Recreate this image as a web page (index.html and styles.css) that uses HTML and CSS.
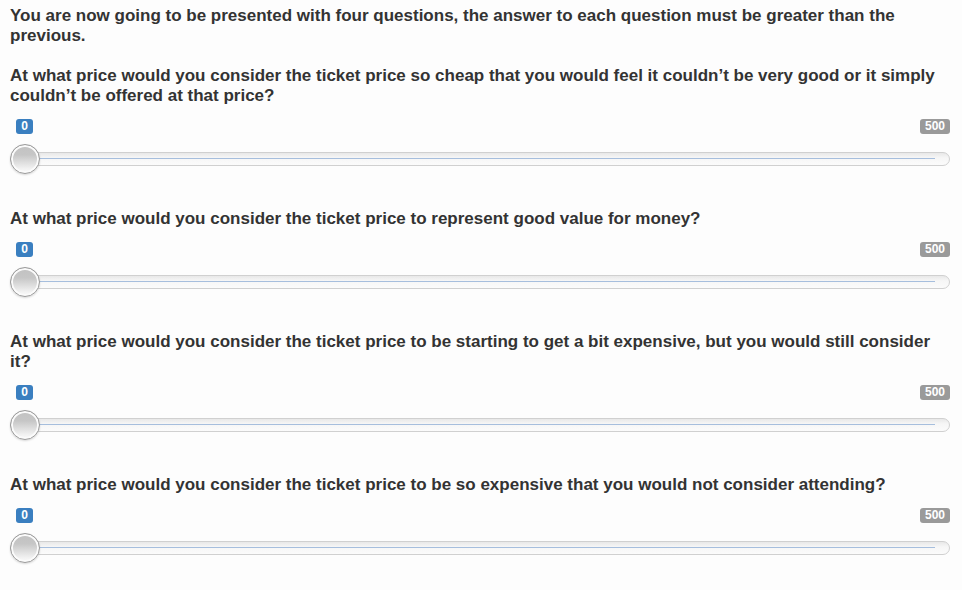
FILE: index.html
```html
<!DOCTYPE html>
<html>
<head>
<meta charset="utf-8">
<link rel="stylesheet" href="styles.css">
</head>
<body>
<div class="page">
  <p class="intro">You are now going to be presented with four questions, the answer to each question must be greater than the previous.</p>

  <div class="question">
    <p class="q-text">At what price would you consider the ticket price so cheap that you would feel it couldn’t be very good or it simply couldn’t be offered at that price?</p>
    <div class="labels"><span class="badge badge-val">0</span><span class="badge badge-max">500</span></div>
    <div class="slider"><div class="track"><div class="line"></div></div><div class="thumb"></div></div>
  </div>

  <div class="question">
    <p class="q-text">At what price would you consider the ticket price to represent good value for money?</p>
    <div class="labels"><span class="badge badge-val">0</span><span class="badge badge-max">500</span></div>
    <div class="slider"><div class="track"><div class="line"></div></div><div class="thumb"></div></div>
  </div>

  <div class="question">
    <p class="q-text">At what price would you consider the ticket price to be starting to get a bit expensive, but you would still consider it?</p>
    <div class="labels"><span class="badge badge-val">0</span><span class="badge badge-max">500</span></div>
    <div class="slider"><div class="track"><div class="line"></div></div><div class="thumb"></div></div>
  </div>

  <div class="question">
    <p class="q-text">At what price would you consider the ticket price to be so expensive that you would not consider attending?</p>
    <div class="labels"><span class="badge badge-val">0</span><span class="badge badge-max">500</span></div>
    <div class="slider"><div class="track"><div class="line"></div></div><div class="thumb"></div></div>
  </div>
</div>
</body>
</html>
```
FILE: styles.css
```css
html, body {
  margin: 0;
  padding: 0;
  background: #fdfdfd;
}
.page {
  padding: 6px 12px 0 10px;
  font-family: "Liberation Sans", Arial, sans-serif;
  font-weight: bold;
  font-size: 17px;
  line-height: 20px;
  color: #333333;
}
p {
  margin: 0;
}
.intro {
  margin-bottom: 20px;
}
.question {
  margin-bottom: 35px;
}
.labels {
  display: flex;
  justify-content: space-between;
  margin-top: 13px;
  padding-left: 6px;
  height: 15px;
}
.badge {
  display: inline-block;
  height: 15px;
  line-height: 15px;
  font-size: 12px;
  font-weight: bold;
  color: #ffffff;
  border-radius: 3px;
  padding: 0 4px;
  text-align: center;
}
.badge-val {
  background: #3a7fc0;
  min-width: 9px;
}
.badge-max {
  background: #9a9a9a;
  min-width: 22px;
}
.slider {
  position: relative;
  height: 30px;
  margin-top: 10px;
}
.track {
  position: absolute;
  left: 0;
  right: 0;
  top: 8px;
  height: 12px;
  border: 1px solid #d0d0d0;
  border-radius: 7px;
  background: linear-gradient(#e8e8e8, #f6f6f6 40%, #fbfbfb);
}
.line {
  position: absolute;
  left: 22px;
  right: 14px;
  top: 5px;
  height: 1px;
  background: #a6bedd;
}
.thumb {
  position: absolute;
  left: 0;
  top: 0;
  width: 28px;
  height: 28px;
  border-radius: 50%;
  border: 1px solid #9a9a9a;
  background: linear-gradient(#c2c2c2 0, #c6c6c6 35%, #dcdcdc 60%, #f2f2f2 85%, #fafafa 100%);
  box-shadow: inset 0 0 0 2px #fbfbfb, 0 1px 2px rgba(0,0,0,0.15);
}
```
